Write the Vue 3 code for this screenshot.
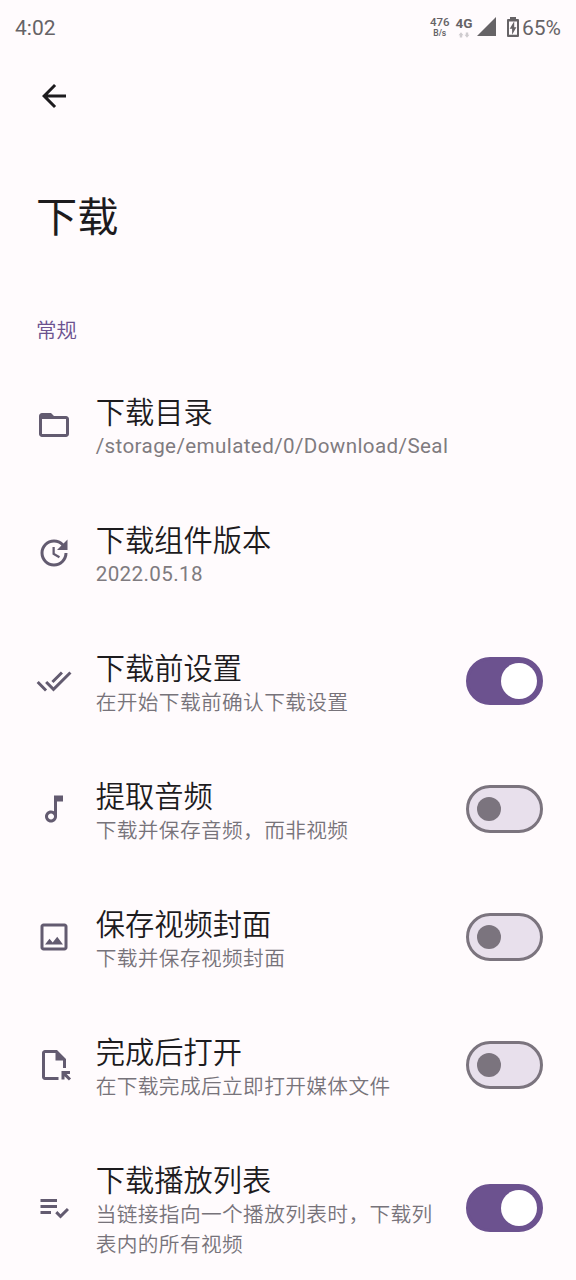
<script setup>
import { ref } from 'vue'

const icons = {
  back: 'M20 11H7.83l5.59-5.59L12 4l-8 8 8 8 1.41-1.41L7.83 13H20v-2z',
  folder: 'M20 6h-8l-2-2H4c-1.1 0-1.99.9-1.99 2L2 18c0 1.1.9 2 2 2h16c1.1 0 2-.9 2-2V8c0-1.1-.9-2-2-2zm0 12H4V8h16v10z',
  update: 'M11 8v5l4.25 2.52.77-1.28-3.52-2.09V8H11zm10 2V3l-2.64 2.64C16.74 4.01 14.49 3 12 3c-4.97 0-9 4.03-9 9s4.03 9 9 9 9-4.03 9-9h-2c0 3.86-3.14 7-7 7s-7-3.14-7-7 3.14-7 7-7c1.93 0 3.68.79 4.95 2.05L14 10h7z',
  doneAll: 'M18 7l-1.41-1.41-6.34 6.34 1.41 1.41L18 7zm4.24-1.41L11.66 16.17 7.48 12l-1.41 1.41L11.66 19l12-12-1.42-1.41zM.41 13.41L6 19l1.41-1.41L1.83 12 .41 13.41z',
  music: 'M12 3l.01 10.55c-.59-.34-1.27-.55-2-.55C7.79 13 6 14.79 6 17s1.79 4 4.01 4S14 19.21 14 17V7h4V3h-6zm-1.99 16c-1.1 0-2-.9-2-2s.9-2 2-2 2 .9 2 2-.9 2-2 2z',
  image: 'M19 5v14H5V5h14m0-2H5c-1.1 0-2 .9-2 2v14c0 1.1.9 2 2 2h14c1.1 0 2-.9 2-2V5c0-1.1-.9-2-2-2zm-4.86 8.86l-3 3.87L9 13.14 6 17h12l-3.86-5.14z',
  fileOpen: 'M14 2H6C4.9 2 4 2.9 4 4v16c0 1.1.89 2 1.99 2H15v-2H6V4h7v5h5v5h2V8L14 2zM19 21.66v-2.24l2.95 2.95 1.41-1.41L20.41 18h2.24v-2H17v5.66H19z',
  playlist: 'M3 10h11v2H3zm0-4h11v2H3zm0 8h7v2H3zm17.59-2.07l-4.25 4.24-2.12-2.12-1.41 1.41L16.34 19 22 13.34z',
}

const items = ref([
  { icon: 'folder', title: '下载目录', desc: '/storage/emulated/0/Download/Seal', latin: true },
  { icon: 'update', title: '下载组件版本', desc: '2022.05.18', latin: true },
  { icon: 'doneAll', title: '下载前设置', desc: '在开始下载前确认下载设置', on: true },
  { icon: 'music', title: '提取音频', desc: '下载并保存音频，而非视频', on: false },
  { icon: 'image', title: '保存视频封面', desc: '下载并保存视频封面', on: false },
  { icon: 'fileOpen', title: '完成后打开', desc: '在下载完成后立即打开媒体文件', on: false },
  { icon: 'playlist', title: '下载播放列表', desc: '当链接指向一个播放列表时，下载列表内的所有视频', on: true },
])
</script>

<template>
  <main class="screen">
    <header class="status">
      <span class="clock">4:02</span>
      <div class="indicators">
        <div class="speed"><b>476</b><small>B/s</small></div>
        <div class="network">
          <b>4G</b>
          <svg width="12" height="6" viewBox="0 0 12 6"><path d="M3 .2l2.500 3H4.200v2.300H1.800V3.200H.5zM9 5.700L6.500 2.800h1.300V.5h2.400v2.300h1.300z" /></svg>
        </div>
        <svg class="signal" width="19" height="19" viewBox="0 0 19 19"><path d="M19 0v19H0z" /></svg>
        <svg class="battery" width="12" height="20" viewBox="0 0 12 20">
          <path fill-rule="evenodd" d="M3 0h6v2h2q1 0 1 1v16q0 1-1 1H1q-1 0-1-1V3q0-1 1-1h2zM2 4.500v13.300h8V4.500z" />
          <path d="M7.200 4.300L2.700 11.800h2.400v6l4.300-7.600H7.200z" />
        </svg>
        <span class="percent">65%</span>
      </div>
    </header>

    <button class="back" aria-label="返回">
      <svg class="icon" viewBox="0 0 24 24"><path :d="icons.back" /></svg>
    </button>
    <h1>下载</h1>
    <h2>常规</h2>

    <section class="list">
      <div v-for="item in items" :key="item.icon" class="row">
        <svg class="icon" viewBox="0 0 24 24"><path :d="icons[item.icon]" /></svg>
        <div class="text">
          <div class="title">{{ item.title }}</div>
          <div class="desc" :class="{ latin: item.latin }">{{ item.desc }}</div>
        </div>
        <button
          v-if="item.on !== undefined"
          class="switch"
          :class="{ on: item.on }"
          role="switch"
          :aria-checked="item.on"
          @click="item.on = !item.on"
        >
          <span class="thumb"></span>
        </button>
      </div>
    </section>
  </main>
</template>

<style>
body {
  background: #fffbfd;
}
</style>

<style scoped>
.screen {
  box-sizing: border-box;
  width: 576px;
  height: 1280px;
  overflow: hidden;
  background: #fffbfd;
  color: #1d1b1e;
  font-family: Roboto, "Noto Sans CJK SC", sans-serif;
}
button {
  border: 0;
  padding: 0;
  background: none;
  font: inherit;
}
svg {
  display: block;
  fill: currentColor;
}
.status {
  display: flex;
  justify-content: space-between;
  align-items: center;
  height: 54px;
  padding: 0 15px;
  color: #666366;
}
.clock,
.percent {
  padding-top: 1px;
  font-size: 21px;
}
.indicators {
  display: flex;
  align-items: center;
}
.speed,
.network {
  display: flex;
  flex-direction: column;
  align-items: center;
}
.speed b {
  font-size: 11.500px;
  line-height: 11px;
  font-weight: 500;
}
.speed small {
  font-size: 8.500px;
  line-height: 10px;
  font-weight: 600;
}
.network {
  margin-left: 6px;
}
.network b {
  font-size: 13.500px;
  line-height: 13px;
  font-weight: 700;
}
.network svg {
  margin-top: 2px;
  color: #cfcccf;
}
.signal {
  margin: 0 0 1px 4px;
}
.battery {
  margin-left: 11px;
}
.percent {
  margin-left: 3.500px;
}
.icon {
  flex: none;
  width: 36px;
  height: 36px;
}
.back {
  display: block;
  margin: 24px 0 0 35.700px;
  color: #1d1b1e;
}
h1 {
  margin: 74px 0 0 36px;
  font-size: 41.200px;
  line-height: 60px;
  font-weight: 400;
}
h2 {
  margin: 68px 0 0 36px;
  font-size: 20.500px;
  line-height: 30px;
  font-weight: 350;
  color: #6c528f;
}
.list {
  margin-top: 15px;
}
.row {
  display: flex;
  align-items: center;
  box-sizing: border-box;
  padding: 30px 33px 30px 35.700px;
}
.row .icon {
  color: #635b70;
}
.text {
  flex: 1;
  min-width: 0;
  margin-left: 24px;
  padding-top: 3px;
  margin-bottom: -3px;
}
.title {
  font-size: 29.250px;
  font-weight: 350;
  line-height: 38px;
}
.desc {
  font-size: 20.700px;
  font-weight: 350;
  line-height: 30px;
  letter-spacing: 0.370px;
  color: #77737a;
}
.desc.latin {
  margin: -1px 0 1px;
  font-size: 20.600px;
  font-weight: 400;
  letter-spacing: 0.380px;
  color: #7f7b80;
}
.switch {
  flex: none;
  display: flex;
  align-items: center;
  box-sizing: border-box;
  width: 77.500px;
  height: 47.500px;
  margin-left: 24px;
  padding: 0 8.500px;
  border: 3px solid #7b747e;
  border-radius: 24px;
  background: #e8e0ec;
}
.thumb {
  width: 24px;
  height: 24px;
  border-radius: 50%;
  background: #7b747e;
}
.switch.on {
  justify-content: flex-end;
  padding: 0 3px;
  border-color: #6c528f;
  background: #6c528f;
}
.switch.on .thumb {
  width: 36px;
  height: 36px;
  background: #fff;
}
</style>
